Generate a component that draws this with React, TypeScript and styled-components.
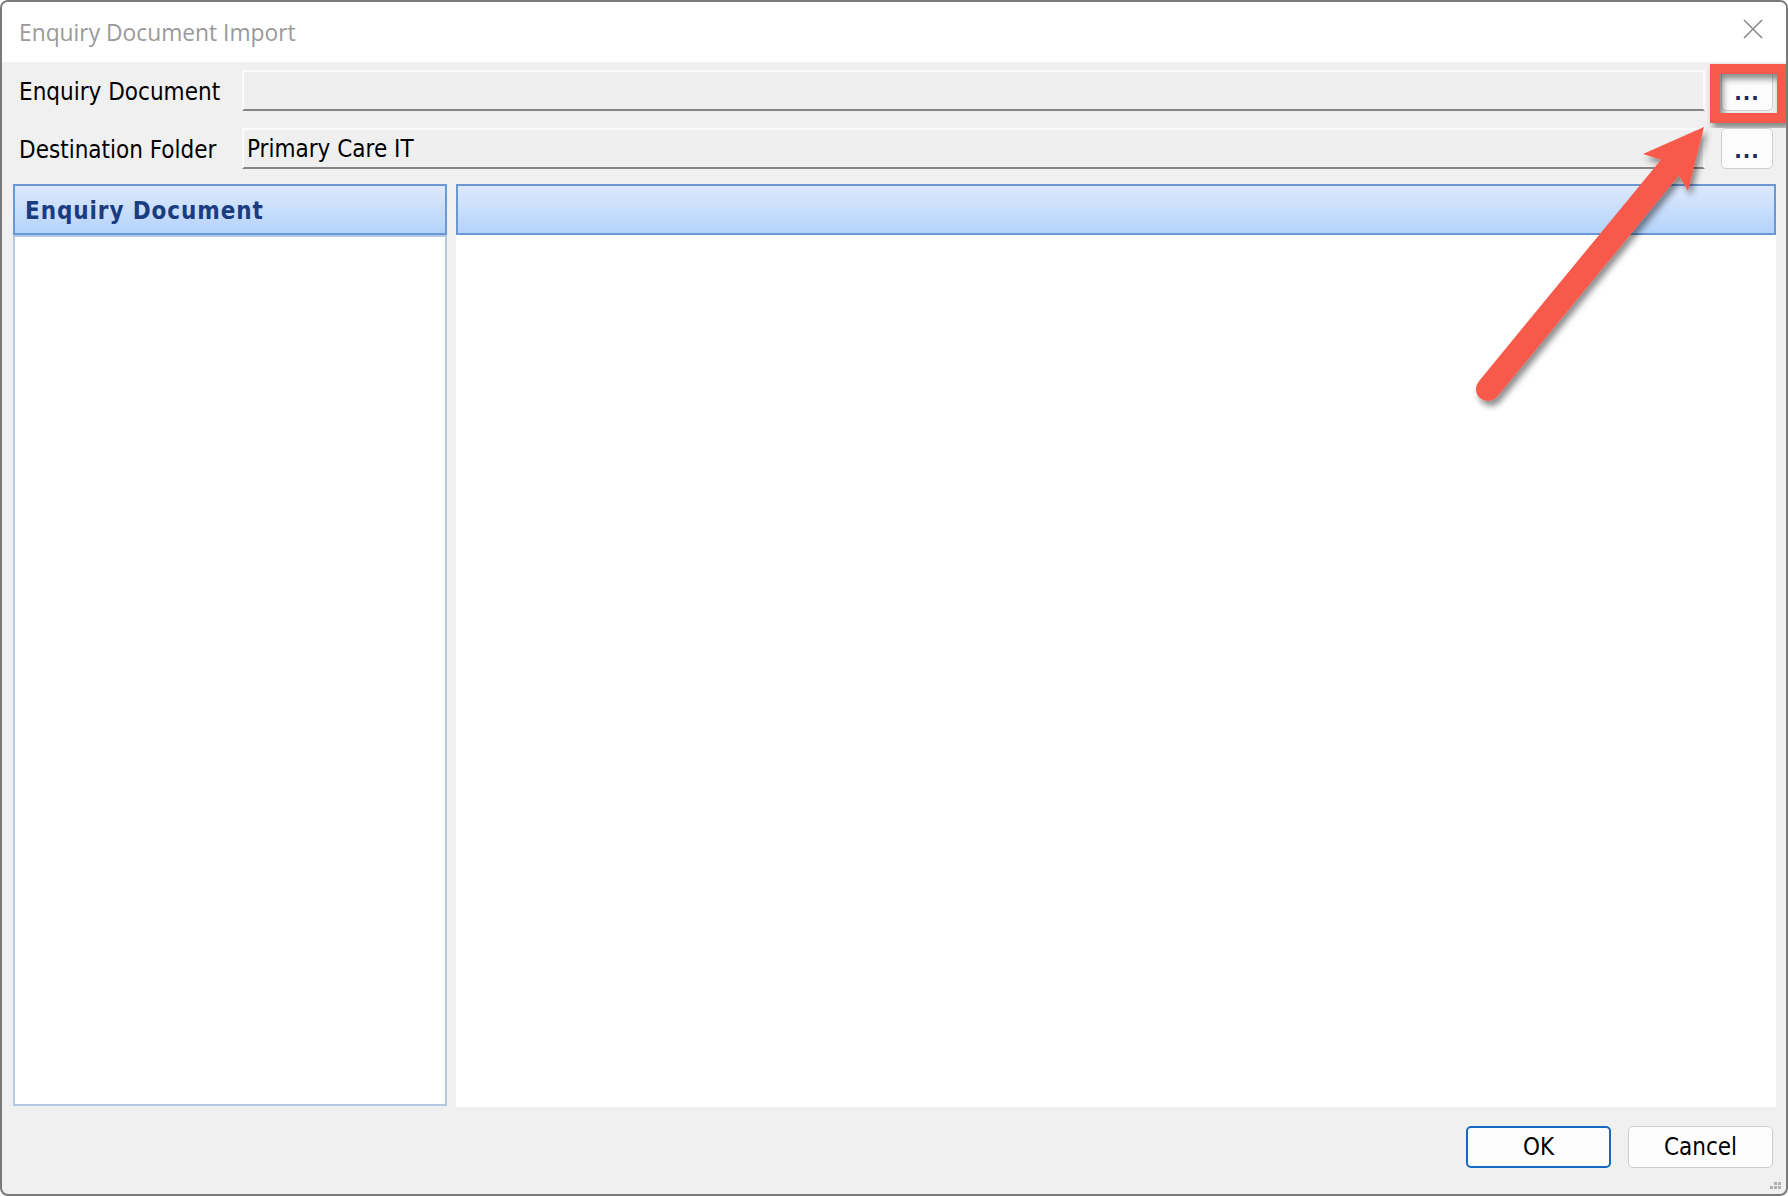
import React from "react";
import styled, { createGlobalStyle } from "styled-components";

const Global = createGlobalStyle`
  html, body { margin: 0; padding: 0; background: #ffffff; }
  * { box-sizing: border-box; }
`;

const Win = styled.div`
  position: relative;
  width: 1788px;
  height: 1196px;
  border: 2px solid #7a7a7a;
  border-radius: 8px;
  overflow: hidden;
  display: flex;
  flex-direction: column;
  background: #f0f0f0;
  font-family: "DejaVu Sans Condensed", "DejaVu Sans", sans-serif;
  font-stretch: condensed;
`;

const TitleBar = styled.div`
  height: 60px;
  flex: none;
  background: #ffffff;
  display: flex;
  align-items: center;
  justify-content: space-between;
  padding: 0 23px 0 17px;
`;

const Title = styled.div`
  font-family: "Open Sans", "Noto Sans", sans-serif;
  font-stretch: normal;
  font-size: 22.8px;
  color: #9a9a9a;
`;

const Close = styled.svg`
  width: 20px;
  height: 20px;
  margin-top: -6px;
`;

const Form = styled.div`
  display: flex;
  flex-direction: column;
  gap: 17px;
  padding: 8px 13px 0 17px;
`;

const Row = styled.div`
  display: grid;
  grid-template-columns: 223px 1fr 52px;
  align-items: center;
  height: 41px;
`;

const Label = styled.div`
  font-size: 24px;
  color: #000;
  white-space: nowrap;
  padding-top: 2px;
`;

const TextBox = styled.div`
  height: 41px;
  margin-right: 16px;
  background: #efefef;
  border-top: 2px solid #fbfbfb;
  border-left: 2px solid #fbfbfb;
  border-right: 2px solid #fbfbfb;
  border-bottom: 2px solid #858585;
  padding: 0 3px;
  display: flex;
  align-items: center;
  font-size: 24px;
  color: #000;
`;

const Browse = styled.button`
  height: 41px;
  width: 52px;
  padding: 0;
  border: 1px solid #cfcfcf;
  border-radius: 5px;
  background: #fcfcfc;
  font-family: inherit;
  font-stretch: condensed;
  font-size: 22px;
  letter-spacing: 1px;
  color: #1a2a5a;
  font-weight: bold;
  line-height: 1;
  padding-top: 4px;
`;

const Panels = styled.div`
  flex: 1;
  display: grid;
  grid-template-columns: 434px 1fr;
  column-gap: 9px;
  margin-top: 15px;
  padding: 0 10px 0 11px;
`;

const Panel = styled.div`
  display: flex;
  flex-direction: column;
  min-height: 0;
`;

const PanelHeader = styled.div`
  height: 51px;
  flex: none;
  border: 2px solid #6b97d3;
  background: linear-gradient(to bottom, #dde9fd, #b4d3fb);
  display: flex;
  align-items: center;
  padding: 3px 0 0 10px;
  font-weight: bold;
  font-size: 24px;
  letter-spacing: 0.9px;
  color: #1b3c80;
`;

const PanelBody = styled.div<{ $bordered?: boolean }>`
  flex: 1;
  background: #ffffff;
  border: ${(p) => (p.$bordered ? "2px solid #b3c8e2" : "none")};
  ${(p) => (p.$bordered ? "" : "margin-bottom: -1px;")}
`;

const Footer = styled.div`
  display: flex;
  justify-content: flex-end;
  gap: 17px;
  padding: 20px 13px 26px 0;
`;

const DlgButton = styled.button<{ $primary?: boolean }>`
  width: 145px;
  height: 42px;
  border-radius: 5px;
  background: #fdfdfd;
  border: ${(p) => (p.$primary ? "2px solid #1569c0" : "1px solid #cdcdcd")};
  font-family: inherit;
  font-stretch: condensed;
  font-size: 24px;
  color: #000;
  padding: 0;
`;

const Grip = styled.svg`
  position: absolute;
  right: 4px;
  bottom: 3px;
  width: 16px;
  height: 10px;
`;

const Overlay = styled.svg`
  position: absolute;
  left: -2px;
  top: -2px;
  width: 1788px;
  height: 1196px;
  pointer-events: none;
`;

export default function App() {
  const red = "#f75a4b";
  return (
    <>
      <Global />
      <Win>
        <TitleBar>
          <Title>Enquiry Document Import</Title>
          <Close viewBox="0 0 20 20">
            <path d="M1 1 L19 19 M19 1 L1 19" stroke="#8c8c8c" strokeWidth="1.6" fill="none" />
          </Close>
        </TitleBar>
        <Form>
          <Row>
            <Label>Enquiry Document</Label>
            <TextBox />
            <Browse>...</Browse>
          </Row>
          <Row>
            <Label>Destination Folder</Label>
            <TextBox>Primary Care IT</TextBox>
            <Browse>...</Browse>
          </Row>
        </Form>
        <Panels>
          <Panel>
            <PanelHeader>Enquiry Document</PanelHeader>
            <PanelBody $bordered />
          </Panel>
          <Panel>
            <PanelHeader />
            <PanelBody />
          </Panel>
        </Panels>
        <Footer>
          <DlgButton $primary>OK</DlgButton>
          <DlgButton>Cancel</DlgButton>
        </Footer>
        <Grip viewBox="0 0 16 10">
          <rect x="8" y="1" width="3" height="3" fill="#b0b0b0" />
          <rect x="12" y="1" width="3" height="3" fill="#b0b0b0" />
          <rect x="4" y="5" width="3" height="3" fill="#b0b0b0" />
          <rect x="8" y="5" width="3" height="3" fill="#b0b0b0" />
          <rect x="12" y="5" width="3" height="3" fill="#b0b0b0" />
        </Grip>
        <Overlay viewBox="0 0 1788 1196">
          <defs>
            <filter id="sh" x="-20%" y="-20%" width="140%" height="140%">
              <feDropShadow dx="3" dy="5" stdDeviation="3" floodColor="#000" floodOpacity="0.45" />
            </filter>
          </defs>
          <rect x="1715" y="69" width="67" height="49" fill="none" stroke={red} strokeWidth="10" filter="url(#sh)" />
          <g filter="url(#sh)">
            <line x1="1488" y1="389" x2="1668" y2="170" stroke={red} strokeWidth="24" strokeLinecap="round" />
            <polygon points="1704,127 1643,154 1672,163 1688,191" fill={red} />
          </g>
        </Overlay>
      </Win>
    </>
  );
}
